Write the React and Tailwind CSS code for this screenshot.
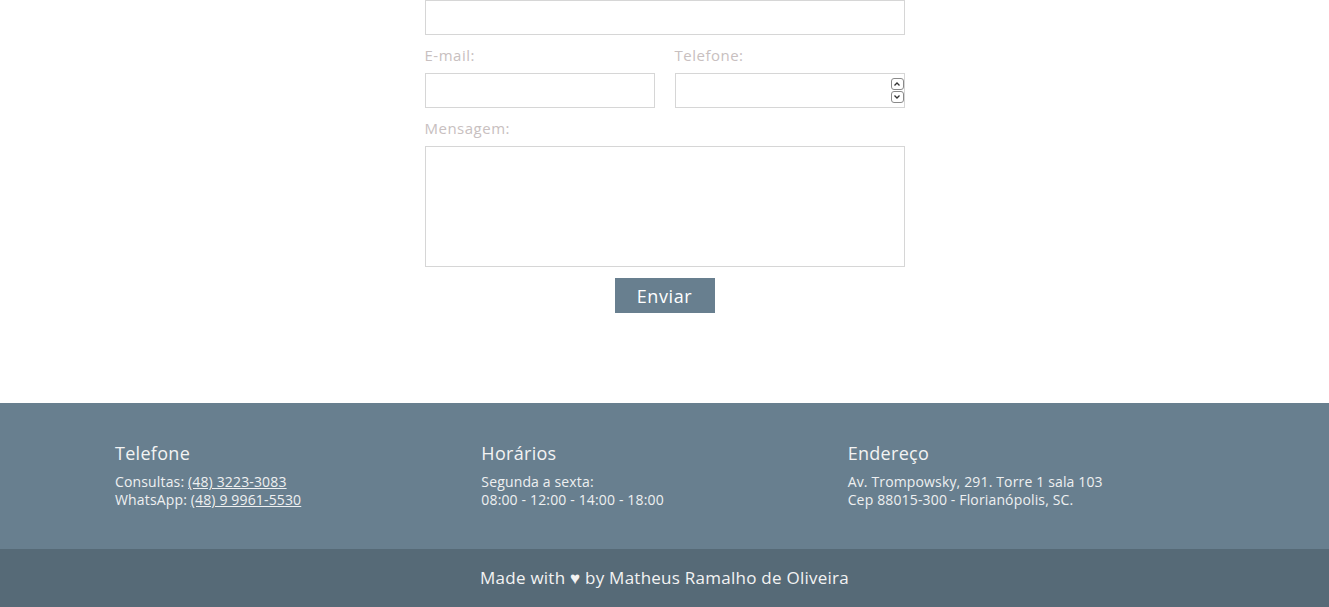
import React from 'react';

const font = { fontFamily: '"Open Sans", "Noto Sans", sans-serif' };

const Chevron = ({ up }) => (
  <svg width="8" height="6" viewBox="0 0 8 6" fill="none">
    <path
      d={up ? 'M1.5 4.5 L4 2 L6.5 4.5' : 'M1.5 1.5 L4 4 L6.5 1.5'}
      stroke="#333"
      strokeWidth="1.3"
    />
  </svg>
);

const FooterColumn = ({ title, children }) => (
  <div className="flex flex-col">
    <h3 className="text-[18px] leading-[24px] tracking-[0.3px] text-[#f3f3f3] mb-[8px]">{title}</h3>
    <div className="text-[14px] leading-[18px] tracking-[0.15px] text-[#eef0f1]">{children}</div>
  </div>
);

export default function App() {
  return (
    <div className="min-h-[607px] bg-white flex flex-col" style={font}>
      <section className="flex justify-center pb-[90px]">
        <form className="w-[480px] flex flex-col" onSubmit={(e) => e.preventDefault()}>
          <input className="h-[35px] border border-[#d6d6d6] outline-none px-2" />

          <div className="grid grid-cols-2 gap-x-[20px] mt-[10px]">
            <div className="flex flex-col">
              <label className="text-[15px] leading-[20px] tracking-[0.5px] text-[#c8c0c0] mb-[8px]">E-mail:</label>
              <input className="h-[35px] border border-[#d6d6d6] outline-none px-2" />
            </div>
            <div className="flex flex-col">
              <label className="text-[15px] leading-[20px] tracking-[0.5px] text-[#c8c0c0] mb-[8px]">Telefone:</label>
              <div className="relative">
                <input className="w-full h-[35px] border border-[#d6d6d6] outline-none px-2" />
                <div className="absolute right-[1px] top-[5px] flex flex-col gap-[1px]">
                  <span className="w-[13px] h-[12px] border border-[#8a8a8a] rounded-[3px] flex items-center justify-center bg-white">
                    <Chevron up />
                  </span>
                  <span className="w-[13px] h-[12px] border border-[#8a8a8a] rounded-[3px] flex items-center justify-center bg-white">
                    <Chevron />
                  </span>
                </div>
              </div>
            </div>
          </div>

          <label className="text-[15px] leading-[20px] tracking-[0.5px] text-[#c8c0c0] mt-[10px] mb-[8px]">Mensagem:</label>
          <textarea className="h-[121px] border border-[#d6d6d6] outline-none p-2 resize-none" />

          <div className="flex justify-center mt-[11px]">
            <button
              type="submit"
              className="w-[100px] h-[35px] bg-[#687f8f] text-white text-[18px] tracking-[0.6px] leading-none"
            >
              Enviar
            </button>
          </div>
        </form>
      </section>

      <footer className="bg-[#687f8f] h-[146px] flex justify-center pt-[38px]">
        <div className="w-[1099px] grid grid-cols-3">
          <FooterColumn title="Telefone">
            <p>
              Consultas: <a href="#" className="underline">(48) 3223-3083</a>
            </p>
            <p>
              WhatsApp: <a href="#" className="underline">(48) 9 9961-5530</a>
            </p>
          </FooterColumn>
          <FooterColumn title="Horários">
            <p>Segunda a sexta:</p>
            <p>08:00 - 12:00 - 14:00 - 18:00</p>
          </FooterColumn>
          <FooterColumn title="Endereço">
            <p>Av. Trompowsky, 291. Torre 1 sala 103</p>
            <p>Cep 88015-300 - Florianópolis, SC.</p>
          </FooterColumn>
        </div>
      </footer>

      <div className="bg-[#566a77] h-[58px] flex items-center justify-center">
        <p className="text-[17px] tracking-[0.25px] text-[#f3f3f3]">Made with ♥ by Matheus Ramalho de Oliveira</p>
      </div>
    </div>
  );
}
